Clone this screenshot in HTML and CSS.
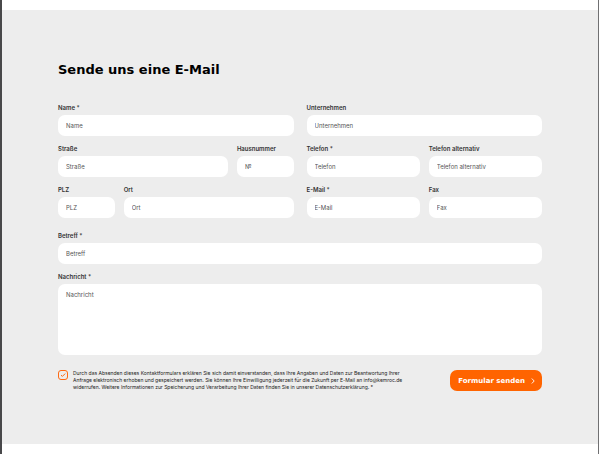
FILE: index.html
```html
<!DOCTYPE html>
<html lang="de">
<head>
<meta charset="utf-8">
<meta name="viewport" content="width=device-width, initial-scale=1">
<title>Kontakt</title>
<link rel="stylesheet" href="styles.css">
</head>
<body>
<main class="contact">
  <h1 class="title">Sende uns eine E-Mail</h1>
  <form class="form">
    <div class="columns">
      <div class="column">
        <div class="field"><label for="name">Name *</label><input id="name" type="text" placeholder="Name"></div>
        <div class="row row-street">
          <div class="field"><label for="street">Straße</label><input id="street" type="text" placeholder="Straße"></div>
          <div class="field"><label for="number">Hausnummer</label><input id="number" type="text" placeholder="№"></div>
        </div>
        <div class="row row-city">
          <div class="field"><label for="zip">PLZ</label><input id="zip" type="text" placeholder="PLZ"></div>
          <div class="field"><label for="city">Ort</label><input id="city" type="text" placeholder="Ort"></div>
        </div>
      </div>
      <div class="column">
        <div class="field"><label for="company">Unternehmen</label><input id="company" type="text" placeholder="Unternehmen"></div>
        <div class="row">
          <div class="field"><label for="phone">Telefon *</label><input id="phone" type="tel" placeholder="Telefon"></div>
          <div class="field"><label for="phone-alt">Telefon alternativ</label><input id="phone-alt" type="tel" placeholder="Telefon alternativ"></div>
        </div>
        <div class="row">
          <div class="field"><label for="email">E-Mail *</label><input id="email" type="email" placeholder="E-Mail"></div>
          <div class="field"><label for="fax">Fax</label><input id="fax" type="tel" placeholder="Fax"></div>
        </div>
      </div>
    </div>
    <div class="column">
      <div class="field"><label for="subject">Betreff *</label><input id="subject" type="text" placeholder="Betreff"></div>
      <div class="field"><label for="message">Nachricht *</label><textarea id="message" placeholder="Nachricht"></textarea></div>
    </div>
    <div class="footer">
      <div class="consent">
        <span class="check">
          <input id="consent" type="checkbox" checked>
          <svg viewBox="0 0 10 10" aria-hidden="true"><path d="M3 5.1 4.4 6.4 7.2 3.6"/></svg>
        </span>
        <label for="consent">Durch das Absenden dieses Kontaktformulars erklären Sie sich damit einverstanden, dass Ihre Angaben und Daten zur Beantwortung Ihrer Anfrage elektronisch erhoben und gespeichert werden. Sie können Ihre Einwilligung jederzeit für die Zukunft per E-Mail an info@kemroc.de widerrufen. Weitere Informationen zur Speicherung und Verarbeitung Ihrer Daten finden Sie in unserer Datenschutzerklärung. *</label>
      </div>
      <button class="submit" type="submit">Formular senden
        <svg viewBox="0 0 4 6" aria-hidden="true"><path d="M.8.5 3.2 3 .8 5.5"/></svg>
      </button>
    </div>
  </form>
</main>
</body>
</html>
```
FILE: styles.css
```css
* {
  box-sizing: border-box;
}

body {
  margin: 0;
  min-height: 100vh;
  padding: 10px 0;
  border-left: 2px solid #48484a;
  border-right: 1px solid #707072;
  background: #fff;
  color: #333;
  font-family: Inter, "Liberation Sans", sans-serif;
  font-size: 6px;
  line-height: 8px;
}

.contact {
  min-height: calc(100vh - 20px);
  padding: 52px 56px 48px;
  background: #ededed;
}

.title {
  margin: 0 0 26px;
  color: #000;
  font-family: "DejaVu Sans", sans-serif;
  font-size: 13px;
  font-weight: 700;
  line-height: 16px;
}

.form {
  display: flex;
  flex-direction: column;
  gap: 14px;
}

.columns {
  display: grid;
  grid-template-columns: 1fr 1fr;
  gap: 13px;
}

.column {
  display: flex;
  flex-direction: column;
  gap: 9px;
}

.row {
  display: grid;
  grid-template-columns: 1fr 1fr;
  gap: 9px;
}

.row-street {
  grid-template-columns: 3fr 1fr;
}

.row-city {
  grid-template-columns: 1fr 3fr;
}

.field {
  display: flex;
  flex-direction: column;
  gap: 3px;
  min-width: 0;
}

.field label {
  font-weight: 600;
  white-space: nowrap;
}

.field input,
.field textarea {
  display: block;
  width: 100%;
  height: 21px;
  margin: 0;
  padding: 0 8px;
  border: 0;
  border-radius: 7px;
  background: #fff;
  color: #333;
  font: inherit;
}

.field textarea {
  height: 71px;
  padding: 7px 8px;
  resize: none;
}

.field ::placeholder {
  color: #555;
  opacity: 1;
}

.footer {
  display: flex;
  align-items: flex-start;
  justify-content: space-between;
  gap: 16px;
  padding-top: 1px;
}

.consent {
  display: flex;
  flex: 0 1 352px;
  gap: 5px;
  color: #222;
  font-size: 5px;
  line-height: 7px;
}

.check {
  display: grid;
  flex: none;
  width: 10px;
  height: 10px;
}

.check input,
.check svg {
  grid-area: 1 / 1;
  width: 100%;
  height: 100%;
  margin: 0;
}

.check input {
  appearance: none;
  border: 1px solid #ff6a13;
  border-radius: 3px;
}

.check svg {
  fill: none;
  stroke: #ff6a13;
  stroke-width: 1;
  pointer-events: none;
}

.submit {
  display: flex;
  flex: none;
  align-items: center;
  gap: 6px;
  height: 21px;
  padding: 0 7px 0 8px;
  border: 0;
  border-radius: 7px;
  background: #ff6400;
  color: #fff;
  font-family: "DejaVu Sans", sans-serif;
  font-size: 7px;
  font-weight: 700;
}

.submit svg {
  width: 4px;
  height: 6px;
  fill: none;
  stroke: #fff;
  stroke-width: 0.9;
}
```
